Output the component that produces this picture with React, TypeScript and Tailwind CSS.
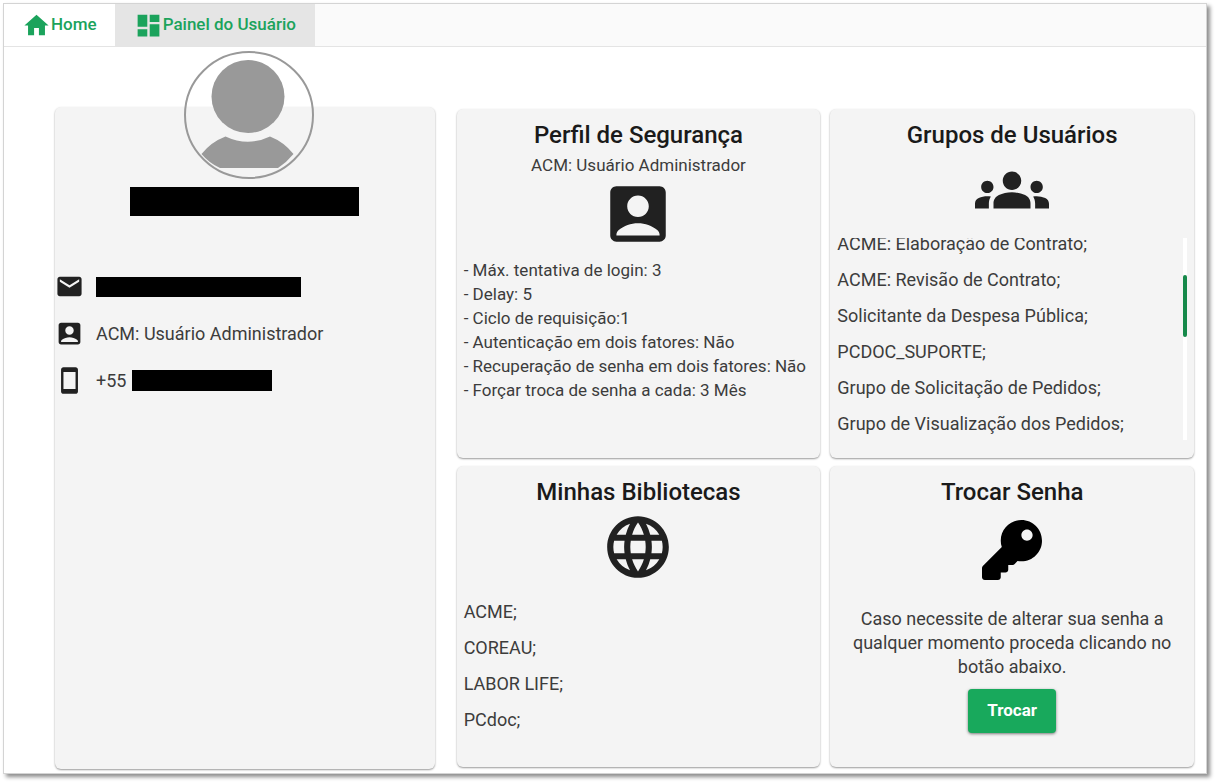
import type { ReactNode } from "react";
import { FaKey } from "react-icons/fa";
import {
  MdAccountBox,
  MdDashboard,
  MdEmail,
  MdGroups,
  MdHome,
  MdLanguage,
  MdStayCurrentPortrait,
} from "react-icons/md";

const securityProfile = [
  "Máx. tentativa de login: 3",
  "Delay: 5",
  "Ciclo de requisição:1",
  "Autenticação em dois fatores: Não",
  "Recuperação de senha em dois fatores: Não",
  "Forçar troca de senha a cada: 3 Mês",
];

const groups = [
  "ACME: Elaboração de Contrato;",
  "ACME: Revisão de Contrato;",
  "Solicitante da Despesa Pública;",
  "PCDOC_SUPORTE;",
  "Grupo de Solicitação de Pedidos;",
  "Grupo de Visualização dos Pedidos;",
];

const libraries = ["ACME;", "COREAU;", "LABOR LIFE;", "PCdoc;"];

function Card({ title, children }: { title: string; children: ReactNode }) {
  return (
    <section className="flex flex-col items-center rounded-md bg-[#f4f4f4] px-[7px] pt-2 shadow-[0_1px_2px_rgba(0,0,0,0.4)]">
      <h2 className="text-2xl leading-9 font-medium text-[#1a1a1a]">{title}</h2>
      {children}
    </section>
  );
}

function Avatar() {
  return (
    <svg width="130" height="128" viewBox="0 0 130 128" role="img" aria-label="Foto do usuário">
      <ellipse cx="65" cy="64" rx="64" ry="63" fill="none" stroke="#999" strokeWidth="2" />
      <circle cx="64" cy="45.500" r="36.500" fill="#999" />
      <path
        d="M17.500 103Q27 91 41.500 85.500Q64 96 86 85.500Q100 91 109.500 103Q103 111 94 117H36Q25 112 17.500 103Z"
        fill="#999"
      />
    </svg>
  );
}

function ContactRow({ icon, children }: { icon: ReactNode; children: ReactNode }) {
  return (
    <li className="flex h-[47px] items-center gap-3 text-[#212121]">
      {icon}
      <span className="flex items-center gap-1.5 text-lg text-[#3c3c3c]">{children}</span>
    </li>
  );
}

export default function App() {
  return (
    <div className="bg-white pt-[3px] pr-[9px] pb-2 pl-[3px] font-['Roboto',sans-serif] text-[#3c3c3c]">
      <div className="border border-[#d4d4d4] shadow-[3px_3px_4px_rgba(0,0,0,0.45)]">
        <nav className="flex h-[43px] border-b border-[#e4e4e4] bg-[#fafafa] text-[17px] font-medium text-[#1ba35c]">
          <a href="#home" className="flex items-center bg-white px-[18px]">
            <MdHome size={29} />
            Home
          </a>
          <a href="#painel" aria-current="page" className="flex items-center bg-[#e5e5e5] px-[19px]">
            <MdDashboard size={29} />
            Painel do Usuário
          </a>
        </nav>

        <main className="flex gap-[22px] pt-[60px] pr-3 pb-1 pl-[51px]">
          <aside className="w-1/3 rounded-md bg-[#f4f4f4] shadow-[0_1px_2px_rgba(0,0,0,0.4)]">
            <div className="-mt-14 flex justify-center pl-2">
              <Avatar />
            </div>
            <div className="mx-auto mt-2 h-[29px] w-[229px] bg-black" />
            <ul className="mt-[47px]">
              <ContactRow icon={<MdEmail size={29} />}>
                <span className="h-5 w-[205px] bg-black" />
              </ContactRow>
              <ContactRow icon={<MdAccountBox size={29} />}>ACM: Usuário Administrador</ContactRow>
              <ContactRow icon={<MdStayCurrentPortrait size={29} />}>
                +55
                <span className="h-[21px] w-[140px] bg-black" />
              </ContactRow>
            </ul>
          </aside>

          <div className="grid flex-1 grid-cols-2 grid-rows-[349px_301px] gap-x-2.5 gap-y-2 py-0.5">
            <Card title="Perfil de Segurança">
              <p className="text-[17px] leading-6">ACM: Usuário Administrador</p>
              <MdAccountBox size={74} className="text-[#212121]" />
              <ul className="mt-[7px] w-full text-[17px] leading-6">
                {securityProfile.map((item) => (
                  <li key={item} className="whitespace-nowrap">
                    - {item}
                  </li>
                ))}
              </ul>
            </Card>

            <Card title="Grupos de Usuários">
              <MdGroups size={74} className="text-[#212121]" />
              <div className="mt-[11px] flex h-[202px] w-full justify-between overflow-hidden">
                {/* list is scrolled a third of a row down */}
                <ul className="-mt-3 text-lg leading-9">
                  {groups.map((group) => (
                    <li key={group}>{group}</li>
                  ))}
                </ul>
                <div className="w-1 bg-white pt-[37px]">
                  <div className="h-[62px] rounded-xs bg-[#16894a]" />
                </div>
              </div>
            </Card>

            <Card title="Minhas Bibliotecas">
              <MdLanguage size={74} className="text-[#212121]" />
              <ul className="mt-2.5 w-full text-lg leading-9">
                {libraries.map((library) => (
                  <li key={library}>{library}</li>
                ))}
              </ul>
            </Card>

            <Card title="Trocar Senha">
              <FaKey size={60} className="my-2.5 text-black" />
              <p className="mt-[17px] px-3 text-center text-lg leading-6">
                Caso necessite de alterar sua senha a qualquer momento proceda clicando no botão abaixo.
              </p>
              <button
                type="button"
                className="mt-2.5 h-11 w-[88px] rounded-sm bg-[#18a95c] text-[17px] font-bold text-white shadow-[0_1px_3px_rgba(0,0,0,0.5)]"
              >
                Trocar
              </button>
            </Card>
          </div>
        </main>
      </div>
    </div>
  );
}
